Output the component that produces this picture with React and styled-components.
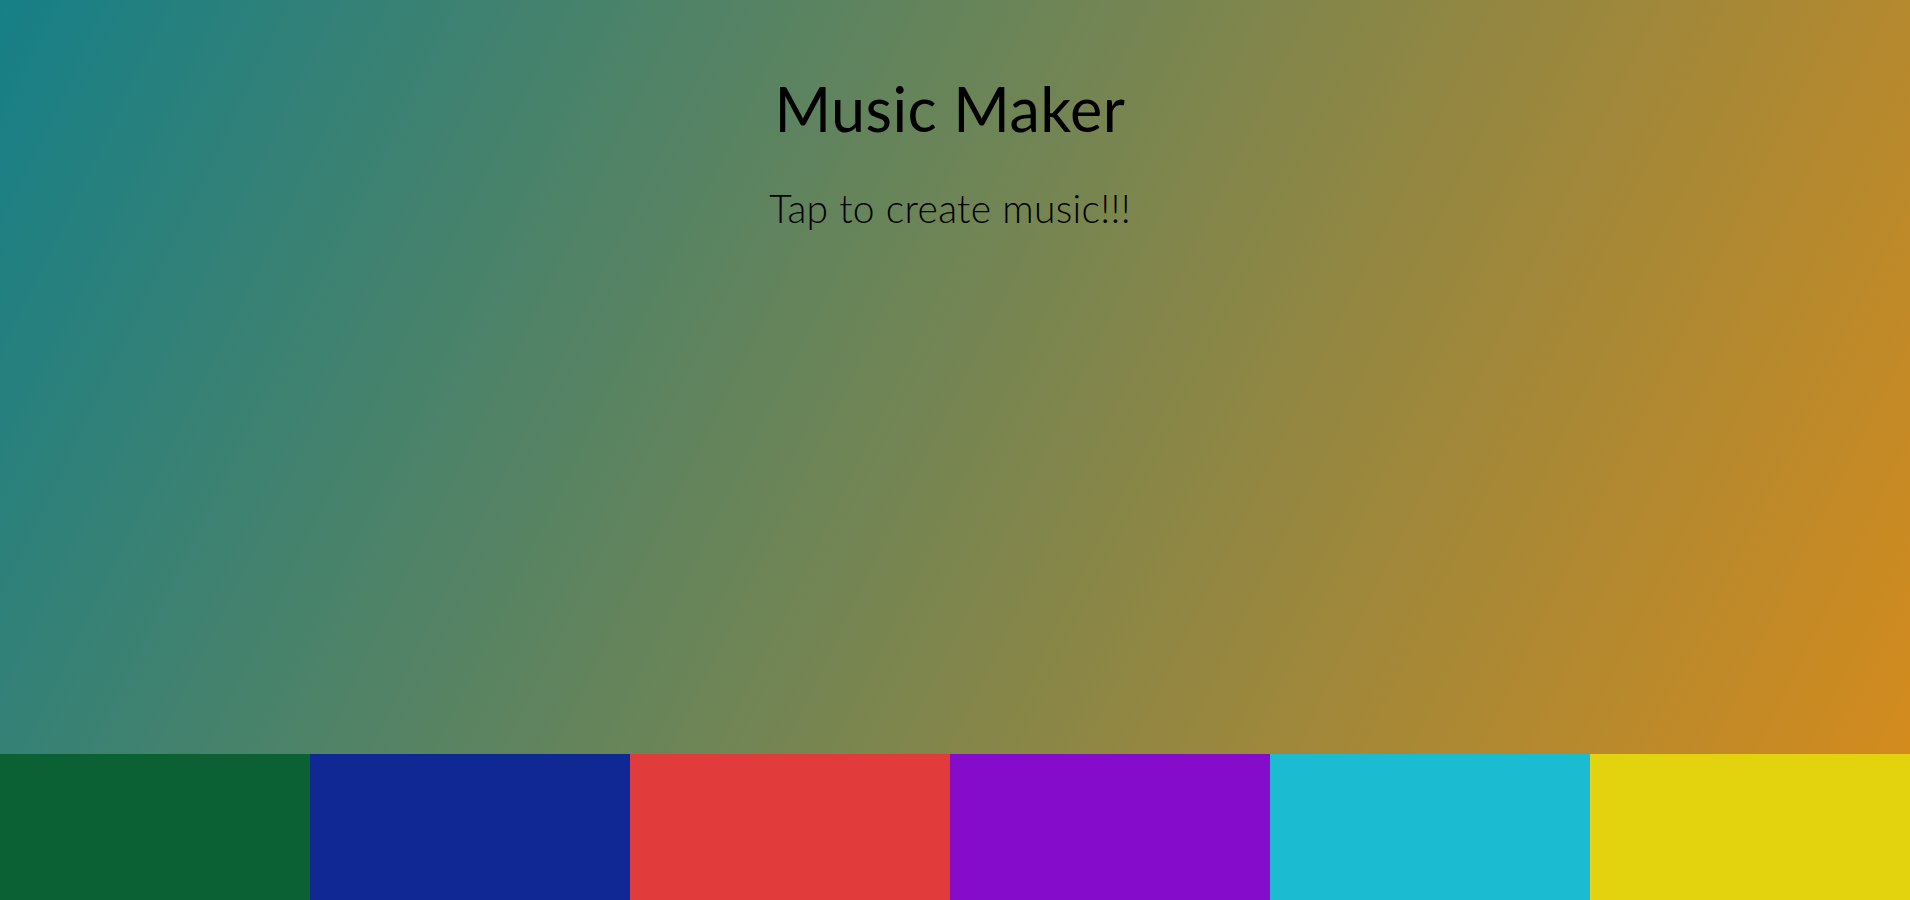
import React from 'react';
import styled, { createGlobalStyle } from 'styled-components';

const GlobalStyle = createGlobalStyle`
  html, body {
    margin: 0;
    padding: 0;
    height: 100%;
  }
  body {
    font-family: 'Lato', 'Open Sans', sans-serif;
    overflow: hidden;
  }
`;

const AppContainer = styled.div`
  height: 100vh;
  display: flex;
  flex-direction: column;
  background: linear-gradient(116deg, #167f87 0%, #d98b1a 100%);
  color: #000000;
`;

const Header = styled.header`
  flex: 1;
  display: flex;
  flex-direction: column;
  align-items: center;
  padding-top: 72px;
  padding-right: 10px;
`;

const Title = styled.h1`
  margin: 0;
  font-size: 61px;
  font-weight: 400;
  letter-spacing: 0.5px;
  line-height: 1.2;
`;

const Subtitle = styled.p`
  margin: 40px 0 0;
  font-size: 39px;
  font-weight: 300;
  letter-spacing: 0.3px;
  line-height: 1.2;
`;

const Pads = styled.div`
  height: 146px;
  display: grid;
  grid-template-columns: 310px repeat(5, 1fr);
`;

const Pad = styled.div`
  background-color: ${(props) => props.color};
  cursor: pointer;
`;

const padColors = ['#0b6133', '#102893', '#e23b3b', '#860ccc', '#1bbcd2', '#e3d30e'];

const App = () => {
  return (
    <AppContainer>
      <GlobalStyle />
      <Header>
        <Title>Music Maker</Title>
        <Subtitle>Tap to create music!!!</Subtitle>
      </Header>
      <Pads>
        {padColors.map((color) => (
          <Pad key={color} color={color} />
        ))}
      </Pads>
    </AppContainer>
  );
};

export default App;
